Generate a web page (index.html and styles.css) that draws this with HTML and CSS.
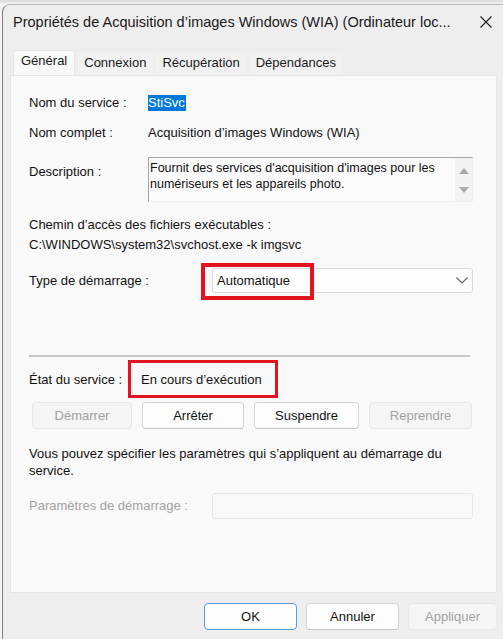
FILE: index.html
```html
<!DOCTYPE html>
<html lang="fr">
<head>
<meta charset="utf-8">
<title>Propriétés</title>
<link rel="stylesheet" href="styles.css">
</head>
<body>
<div class="backdrop"></div>
<div class="window">
  <div class="titlebar">
    <span class="title">Propriétés de Acquisition d’images Windows (WIA) (Ordinateur loc...</span>
    <svg class="close" width="12" height="12" viewBox="0 0 12 12"><path d="M0.5 0.5L11.5 11.5M11.5 0.5L0.5 11.5" stroke="#1a1a1a" stroke-width="1.1" fill="none"/></svg>
  </div>
  <div class="tabs">
    <div class="tab active">Général</div>
    <div class="tab">Connexion</div>
    <div class="tab">Récupération</div>
    <div class="tab">Dépendances</div>
  </div>
  <div class="panel">
    <div class="field name-row"><span class="lbl">Nom du service :</span><span class="selected">StiSvc</span></div>
    <div class="field full-row"><span class="lbl">Nom complet :</span><span>Acquisition d’images Windows (WIA)</span></div>
    <div class="field desc-row">
      <span class="lbl desc-lbl">Description :</span>
      <div class="textbox">
        <div class="tb-text">Fournit des services d'acquisition d'images pour les<br>numériseurs et les appareils photo.</div>
        <div class="tb-scroll">
          <svg width="10" height="6" viewBox="0 0 10 6"><path d="M0 6L5 0L10 6Z" fill="#a9a9a9"/></svg>
          <svg width="10" height="6" viewBox="0 0 10 6"><path d="M0 0L10 0L5 6Z" fill="#a9a9a9"/></svg>
        </div>
      </div>
    </div>
    <div class="path-block">
      <div>Chemin d’accès des fichiers exécutables :</div>
      <div>C:\WINDOWS\system32\svchost.exe -k imgsvc</div>
    </div>
    <div class="field startup-row">
      <span class="lbl wide">Type de démarrage :</span>
      <div class="combo">
        <span>Automatique</span>
        <svg width="12" height="7" viewBox="0 0 12 7"><path d="M0.5 0.5L6 6L11.5 0.5" stroke="#5f5f5f" stroke-width="1.1" fill="none"/></svg>
        <div class="mark mark-combo"></div>
      </div>
    </div>
    <div class="sep"></div>
    <div class="field state-row">
      <span class="lbl state-lbl">État du service :</span>
      <span class="state-val">En cours d’exécution<span class="mark mark-state"></span></span>
    </div>
    <div class="btnrow">
      <div class="btn disabled">Démarrer</div>
      <div class="btn">Arrêter</div>
      <div class="btn">Suspendre</div>
      <div class="btn disabled">Reprendre</div>
    </div>
    <p class="hint">Vous pouvez spécifier les paramètres qui s’appliquent au démarrage du<br>service.</p>
    <div class="field params-row">
      <span class="lbl wide muted">Paramètres de démarrage :</span>
      <div class="input"></div>
    </div>
  </div>
  <div class="footer">
    <div class="btn fbtn default">OK</div>
    <div class="btn fbtn">Annuler</div>
    <div class="btn fbtn apply disabled">Appliquer</div>
  </div>
</div>
</body>
</html>
```
FILE: styles.css
```css
* { box-sizing: border-box; }
html, body { margin: 0; padding: 0; }
body {
  width: 503px;
  height: 639px;
  overflow: hidden;
  background: #f4f4f4;
  font-family: "Liberation Sans", Arial, sans-serif;
  font-size: 13px;
  color: #111;
}
.backdrop {
  height: 4px;
  background: linear-gradient(to bottom, #d8d8d8, #f2f2f2);
}

.window {
  margin-left: 2px;
  height: 635px;
  background: #eeeeee;
  border-left: 1px solid #7e7e7e;
  border-top: 1px solid #b4b4b4;
  border-top-left-radius: 8px;
  display: flex;
  flex-direction: column;
}
.titlebar {
  display: flex;
  justify-content: space-between;
  align-items: flex-start;
  padding: 7px 10px 0 10px;
  height: 45px;
}
.title {
  font-size: 14.5px;
  line-height: 20px;
  color: #1a1a1a;
  white-space: nowrap;
}
.close { margin-top: 4px; margin-right: 1px; }

.tabs {
  display: flex;
  align-items: flex-end;
  gap: 2px;
  padding-left: 10px;
  height: 25px;
}
.tab {
  height: 23px;
  padding: 3px 7px 0 7px;
  line-height: 16px;
  font-size: 13px;
  background: #f1f1f1;
  color: #1a1a1a;
}
.tab.active {
  height: 25px;
  background: #f9f9f9;
  border: 1px solid #e6e6e6;
  border-bottom: none;
  padding-top: 2px;
}

.panel {
  margin: 0 6px 0 7px;
  height: 518px;
  background: #f9f9f9;
  border: 1px solid #e6e6e6;
  padding: 19px 23px 0 18px;
  display: flex;
  flex-direction: column;
}
.field {
  display: flex;
  align-items: center;
  line-height: 16px;
}
.lbl { width: 119px; flex: none; }
.lbl.wide { width: 183px; }
.muted { color: #a3a3a3; }

.selected {
  background: #0078d7;
  color: #fff;
  padding: 0 1px 0 0;
}
.full-row { margin-top: 14px; }

.desc-row { margin-top: 16px; align-items: flex-start; }
.desc-lbl { margin-top: 7px; }
.textbox {
  width: 325px;
  height: 45px;
  border-top: 1px solid #a5a5a5;
  border-left: 1px solid #a5a5a5;
  border-right: 1px solid #f0f0f0;
  border-bottom: 1px solid #f0f0f0;
  background: #fbfbfb;
  display: flex;
  justify-content: space-between;
}
.tb-text {
  font-size: 12.5px;
  line-height: 16px;
  padding: 2px 0 0 1px;
  color: #111;
}
.tb-scroll {
  width: 17px;
  background: #f3f3f3;
  display: flex;
  flex-direction: column;
  align-items: center;
  padding-top: 10px;
  gap: 13px;
}

.path-block {
  margin-top: 13px;
  line-height: 20px;
}

.startup-row { margin-top: 13px; }
.combo {
  position: relative;
  width: 261px;
  height: 25px;
  background: #fdfdfd;
  border: 1px solid #dadada;
  border-radius: 3px;
  display: flex;
  align-items: center;
  justify-content: space-between;
  padding: 0 4px;
}
.mark {
  position: absolute;
  border: 4px solid #e3141f;
  pointer-events: none;
}
.mark-combo {
  left: -12px;
  top: -6px;
  width: 113px;
  height: 37px;
}

.sep {
  margin-top: 62px;
  height: 2px;
  background: #c9c9c9;
  margin-right: 3px;
}

.state-row { margin-top: 15px; }
.state-lbl { width: 112px; }
.state-val { position: relative; }
.mark-state {
  border-width: 3px;
  left: -13px;
  top: -12px;
  width: 150px;
  height: 38px;
}

.btnrow {
  margin-top: 14px;
  margin-left: 3px;
  display: grid;
  grid-template-columns: 100px 102px 105px 103px;
  gap: 10px;
}
.btn {
  height: 27px;
  background: #fdfdfd;
  border: 1px solid #d6d6d6;
  border-bottom-color: #c4c4c4;
  border-radius: 4px;
  display: flex;
  align-items: center;
  justify-content: center;
  color: #111;
  font-size: 13px;
}
.btn.disabled {
  background: #f5f5f5;
  border-color: #e8e8e8;
  color: #a2a2a2;
}

.hint {
  margin: 16px 0 0 0;
  line-height: 17px;
}

.params-row { margin-top: 14px; }
.input {
  width: 261px;
  height: 26px;
  border: 1px solid #e8e8e8;
  border-radius: 3px;
  background: #f9f9f9;
}

.footer {
  display: flex;
  justify-content: flex-end;
  gap: 9px;
  padding: 10px 6px 0 0;
}
.fbtn { width: 93px; height: 27px; }
.fbtn.apply { width: 89px; }
.fbtn.default { border: 1px solid #5b9ad8; }
```
